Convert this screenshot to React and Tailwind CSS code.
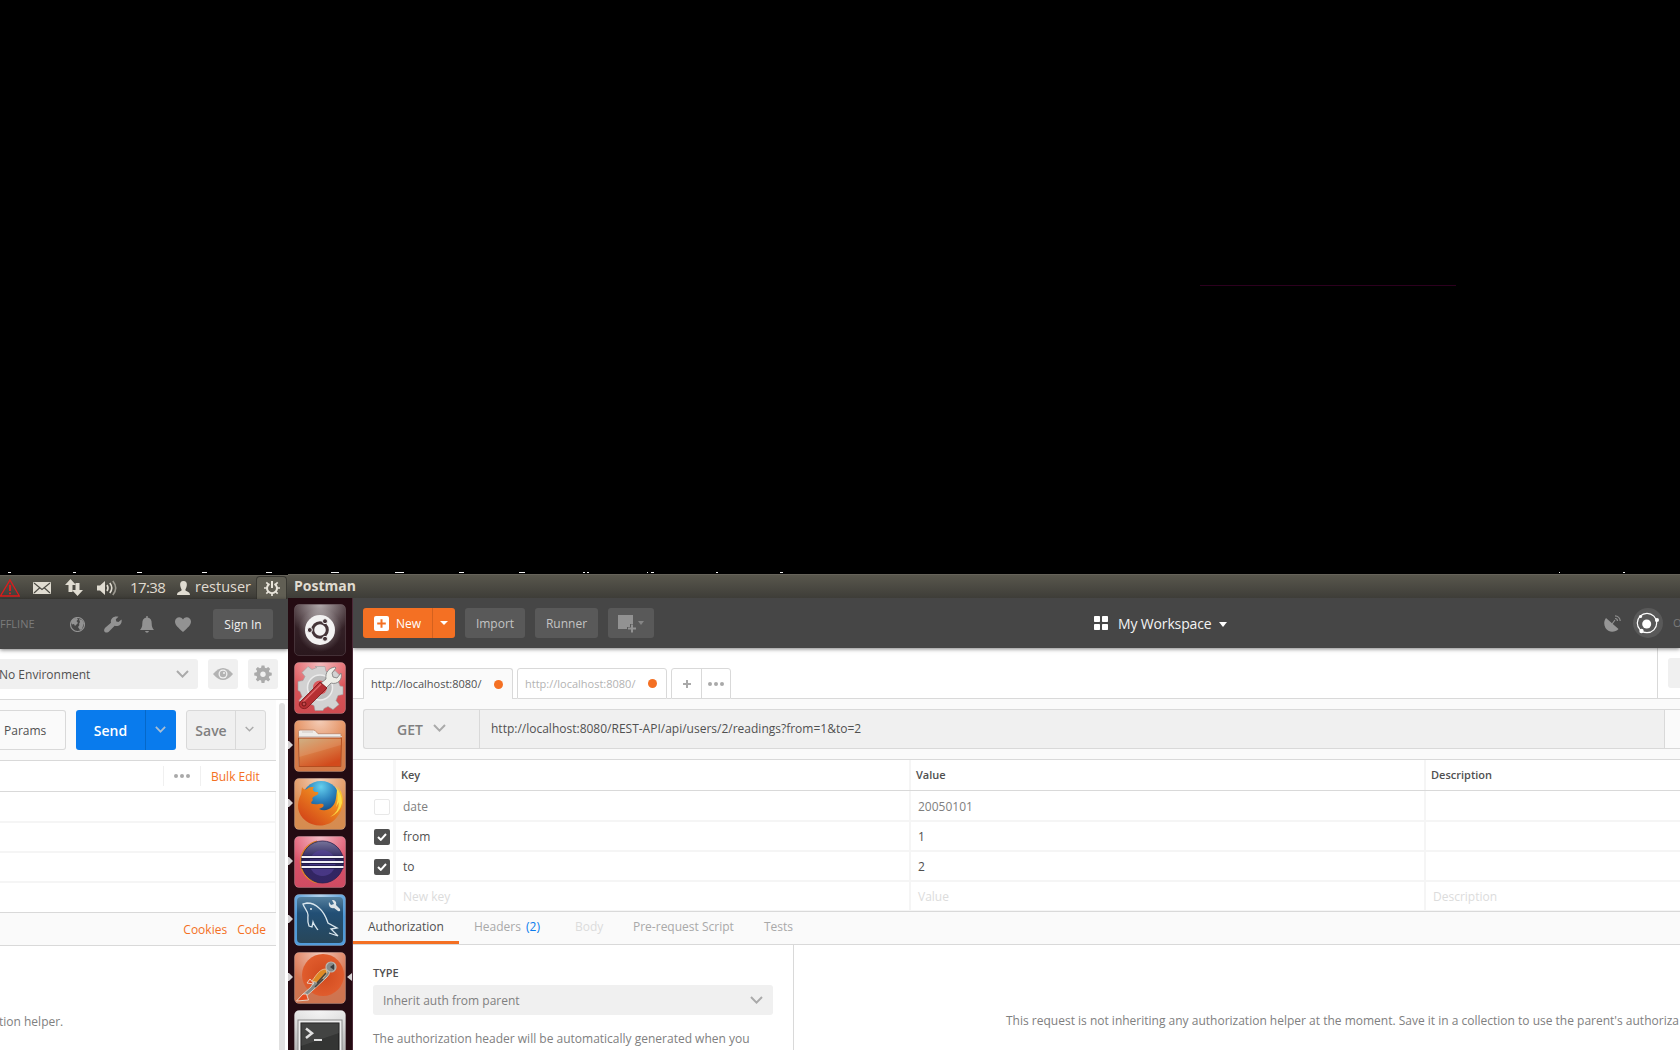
import React from "react";

const dashes = [
  [8, 3], [73, 3], [137, 5], [202, 5], [266, 6], [331, 8], [395, 9], [459, 5],
  [519, 6], [583, 2], [587, 2], [647, 1], [651, 3], [716, 2], [780, 3], [1559, 1], [1623, 2],
];

function Chevron({ w = 13, h = 8, c = "#aaaaaa", s = 2 }) {
  return (
    <svg width={w} height={h} viewBox="0 0 13 8" fill="none" stroke={c} strokeWidth={s}>
      <path d="M1 1l5.500 5.600L12 1" />
    </svg>
  );
}

function Dots() {
  return (
    <svg width="16" height="4" viewBox="0 0 16 4" fill="#a9a9a9">
      <circle cx="2" cy="2" r="2" /><circle cx="8" cy="2" r="2" /><circle cx="14" cy="2" r="2" />
    </svg>
  );
}

const gearPath = "M7.4 0h3.2l.5 2.6 1.5.6L14.8 1.700l2.200 2.200-1.500 2.200.6 1.500 2.600.5v3.200l-2.600.5-.6 1.500 1.500 2.200-2.200 2.200-2.200-1.500-1.500.6-.5 2.600H7.400l-.5-2.600-1.500-.6-2.200 1.500L1 15.500l1.500-2.200-.6-1.500L-.7 11.300V8.100l2.600-.5.6-1.500L1 3.900l2.200-2.200 2.200 1.500 1.500-.6z";

function SystemTray() {
  return (
    <div className="flex h-6 shrink-0 items-center border-t border-[#66635a] bg-linear-to-b from-[#59574d] to-[#3e3d38] text-[#e0dcd1]">
      <svg className="shrink-0" width="20" height="18" viewBox="0 0 20 18" fill="none" stroke="#e01b1b" strokeWidth="1.300">
        <path d="M10 1L19.300 17H.5z" />
        <path d="M10 6v6M10 13.500v1.800" strokeWidth="2" />
      </svg>
      <svg className="ml-[13px] shrink-0" width="18" height="12" viewBox="0 0 18 12">
        <rect width="18" height="12" rx="1" fill="#e0dcd1" />
        <path d="M1 1l8 6.500L17 1M1 11l5.500-5M17 11l-5.500-5" fill="none" stroke="#4b4a43" strokeWidth="1.100" />
      </svg>
      <svg className="ml-[14px] shrink-0" width="18" height="17" viewBox="0 0 18 17" fill="#e0dcd1">
        <path d="M5.500 0l5.500 6H7.500v7h-4V6H0zM12.500 17l5.500-6h-3.500V4h-4v7H7z" />
      </svg>
      <svg className="ml-[14px] shrink-0" width="21" height="16" viewBox="0 0 21 16">
        <path d="M0 5.500h3L8 1v14l-5-4.500H0z" fill="#e0dcd1" />
        <g fill="none" stroke="#e0dcd1" strokeWidth="1.600">
          <path d="M10 5q2 3 0 6M12.800 3q4 5 0 10" /><path d="M15.800 1q5.800 7 0 14" opacity=".55" />
        </g>
      </svg>
      <span className="ml-[12px] w-[37px] pb-[2px] text-[15px] leading-[22px] tracking-[-0.600px]">17:38</span>
      <svg className="ml-[10px] shrink-0" width="13" height="14" viewBox="0 0 13 14" fill="#e0dcd1">
        <path d="M6.500 0C9 0 10.300 2 9.800 4.500 9.500 6.500 8.500 8 8.300 9c.3 1.500 4.700 1.300 4.700 5H0c0-3.700 4.400-3.500 4.700-5C4.500 8 3.500 6.500 3.200 4.500 2.700 2 4 0 6.500 0z" />
      </svg>
      <span className="ml-[5px] w-[61px] pb-[2px] text-[14.500px] leading-[22px]">restuser</span>
      <div className="flex h-[23px] w-[31px] items-center justify-center rounded-t-[4px] border border-b-0 border-[#393832] bg-[#615f54]">
        <svg width="16" height="16" viewBox="0 0 16 16" fill="none" stroke="#e8e4da">
          <path d="M5.500 3.800a5 5 0 1 0 5 0" strokeWidth="2" />
          <path d="M8 1v7" strokeWidth="2" />
          <path d="M2.300 2.300L4.500 4.500M13.700 2.300l-2.200 2.200M0 8h3M13 8h3M2.300 13.700l2.200-2.200M13.700 13.700l-2.200-2.200M8 13v3" strokeWidth="1.700" />
        </svg>
      </div>
    </div>
  );
}

function LeftToolbar() {
  return (
    <div className="relative z-10 flex h-[50px] shrink-0 items-center bg-[#464646] shadow-[0_1px_4px_rgba(0,0,0,0.5)]">
      <span className="w-[70px] text-[11px] text-[#7b7b7b]">FFLINE</span>
      <svg className="shrink-0" width="15" height="15" viewBox="0 0 15 15">
        <circle cx="7.500" cy="7.500" r="7" fill="#464646" stroke="#929292" strokeWidth="1.200" />
        <path d="M1 5C2 2 4 1 7 1l1 1.500L6.500 4 8 6 6 8l-1 1-1-2-2 .5zM9 2l3 1 2 3-1 3-1 3-2 1-2-3 1.500-2L9 7l1-2z" fill="#929292" />
      </svg>
      <svg className="ml-[19px] shrink-0" width="18" height="17" viewBox="0 0 18 17" fill="#929292">
        <path d="M14.500.8L11.800 3.300l.5 2.200 2.200.6 3-2.600c.8 3-1 6-4 6.500-1 .2-2 0-2.800-.2L5 15.500c-1 1.200-3 1.600-4.200.4-1.200-1.200-.8-3 .4-4.200L7 6.800C6 2.600 10-.7 14.500.8z" />
      </svg>
      <svg className="ml-[18px] shrink-0" width="14" height="17" viewBox="0 0 14 17" fill="#929292">
        <path d="M6.300 0h1.400v1.500c3 .6 4 2.500 4 6 0 3.500.8 4.500 2.300 6.500H0c1.500-2 2.300-3 2.300-6.500 0-3.500 1-5.400 4-6zM5 15h4q-.5 1.800-2 1.800T5 15z" />
      </svg>
      <svg className="ml-[21px] shrink-0" width="16" height="15" viewBox="0 0 16 15" fill="#929292">
        <path d="M8 15C3 10.500 0 8 0 4.500 0 .5 5.500-1.500 8 2.500c2.500-4 8-2 8 2C16 8 13 10.500 8 15z" />
      </svg>
      <div className="ml-[22px] flex h-[30px] w-[60px] items-center justify-center rounded-[3px] bg-[#595959] pt-[2px] text-[12px] text-[#f0f0f0]">Sign In</div>
    </div>
  );
}

function LeftScreen() {
  return (
    <div className="mt-px flex w-72 shrink-0 flex-col overflow-hidden bg-white">
      <SystemTray />
      <LeftToolbar />
      <div className="flex h-[51px] shrink-0 items-center border-b border-[#d9d9d9]">
        <div className="flex h-[30px] w-[198px] items-center justify-between rounded-r-[3px] bg-[#f0f0f0] pr-[9px] text-[12px] text-[#505050]">
          <span className="-ml-px pt-[2px]">No Environment</span><Chevron />
        </div>
        <div className="ml-[10px] flex h-[30px] w-[30px] items-center justify-center rounded-[3px] bg-[#f0f0f0]">
          <svg width="20" height="12" viewBox="0 0 20 12">
            <path d="M0 6Q10-6 20 6 10 18 0 6z" fill="#b3b3b3" />
            <circle cx="10" cy="6" r="4.500" fill="#f0f0f0" /><circle cx="10" cy="6" r="3.200" fill="#b3b3b3" /><circle cx="11" cy="5" r="1" fill="#f0f0f0" />
          </svg>
        </div>
        <div className="ml-[10px] flex h-[30px] w-[30px] items-center justify-center rounded-[3px] bg-[#f0f0f0]">
          <svg width="18" height="18" viewBox="-1 -0.500 20 20"><path d={gearPath} fill="#ababab" /><circle cx="9" cy="9.700" r="3" fill="#f0f0f0" /></svg>
        </div>
      </div>
      <div className="flex min-h-0 flex-1">
        <div className="flex w-[276px] shrink-0 flex-col">
          <div className="flex h-[61px] shrink-0 items-center border-b border-[#d9d9d9] bg-[#fafafa]">
            <div className="flex h-10 w-[66px] items-center rounded-r-[3px] border border-l-0 border-[#d9d9d9] pt-[2px] pl-1 text-[12px] text-[#505050]">Params</div>
            <div className="ml-[10px] flex h-10 w-[100px] rounded-[3px] bg-[#097bed] text-[14px] font-semibold text-white">
              <span className="flex w-[69px] items-center justify-center">Send</span>
              <span className="flex flex-1 items-center justify-center border-l border-[#0568c9] pr-px pb-px"><Chevron w={11} h={7} c="#a9bed3" /></span>
            </div>
            <div className="ml-[10px] flex h-10 w-[80px] rounded-[3px] border border-[#d9d9d9] bg-[#f0f0f0] text-[14px] font-semibold text-[#808080]">
              <span className="flex w-[48px] items-center justify-center">Save</span>
              <span className="flex flex-1 items-center justify-center border-l border-[#d9d9d9] pr-[2px] pb-[2px]"><Chevron w={9} h={6} /></span>
            </div>
          </div>
          <div className="flex h-[31px] shrink-0 items-center justify-end border-b border-[#d9d9d9]">
            <div className="flex h-5 w-[37px] items-center justify-center border-l border-[#f0f0f0]"><Dots /></div>
            <div className="flex h-5 w-[76px] items-center border-l border-[#f0f0f0] pt-[2px] pl-[10px] text-[12px] text-[#f47023]">Bulk Edit</div>
          </div>
          <div className="h-[31px] shrink-0 border-r border-b-2 border-[#f5f5f5]" />
          <div className="h-[30px] shrink-0 border-r border-b-2 border-[#f5f5f5]" />
          <div className="h-[30px] shrink-0 border-r border-b-2 border-[#f5f5f5]" />
          <div className="h-[29px] shrink-0 border-r border-[#f5f5f5]" />
          <div className="flex h-[34px] shrink-0 items-center justify-end border-y border-[#d9d9d9] bg-[#fafafa] pt-[2px] pr-[10px] text-[12px] text-[#f47023]">
            <span>Cookies</span><span className="ml-[10px]">Code</span>
          </div>
          <div className="pt-[67px] text-[12px] leading-[18px] whitespace-nowrap text-[#808080]"><span className="-ml-px">tion helper.</span></div>
        </div>
        <div className="mt-[3px] ml-[3px] w-[6px] rounded-t-[3px] bg-[#e0e0e0]" />
      </div>
    </div>
  );
}

function Tile({ from, to, id, children, running, active, stroke = "#ffffff" }) {
  return (
    <div className="relative h-[52px] w-[52px] shrink-0">
      <svg width="52" height="52" viewBox="0 0 52 52">
        <defs>
          <linearGradient id={id} x2="0" y2="1"><stop stopColor={from} /><stop offset="1" stopColor={to} /></linearGradient>
          <radialGradient id={id + "g"} cx=".5" cy="0" r=".65"><stop stopColor="#fff" stopOpacity=".6" /><stop offset="1" stopColor="#fff" stopOpacity="0" /></radialGradient>
        </defs>
        <rect x=".5" y=".5" width="51" height="51" rx="4.500" fill={"url(#" + id + ")"} stroke={stroke} strokeOpacity=".2" />
        <rect x=".5" y=".5" width="51" height="51" rx="4.500" fill={"url(#" + id + "g)"} />
        {children}
      </svg>
      {running && <svg className="absolute top-[21px] -left-[6px]" width="5" height="8" viewBox="0 0 5 8" fill="#d5d2d3"><path d="M0 0h1l4 4-4 4H0z" /></svg>}
      {active && <svg className="absolute top-[21px] -right-[6px]" width="5" height="8" viewBox="0 0 5 8" fill="#d5d2d3"><path d="M5 0v8L0 4z" /></svg>}
    </div>
  );
}

function Dock() {
  return (
    <div className="flex w-[65px] shrink-0 flex-col gap-1.5 overflow-hidden border-r border-[#4b2a38] bg-[#240b12] pt-1.5 pl-1.5">
      <Tile id="dash" from="#3c292e" to="#2a171d" stroke="#bbaeb2">
        <defs><radialGradient id="halo"><stop stopColor="#fff" stopOpacity=".45" /><stop offset="1" stopColor="#fff" stopOpacity="0" /></radialGradient></defs>
        <circle cx="26" cy="26" r="22" fill="url(#halo)" />
        <circle cx="26" cy="26" r="15" fill="#f3f2f2" />
        <circle cx="26" cy="26" r="7.300" fill="none" stroke="#453438" strokeWidth="3" />
        <g fill="#453438" stroke="#f3f2f2" strokeWidth="1"><circle cx="15.800" cy="26" r="2.500" /><circle cx="31" cy="17.200" r="2.500" /><circle cx="31" cy="34.800" r="2.500" /></g>
      </Tile>
      <Tile id="set" from="#e25a60" to="#cf4b50">
        <g transform="translate(26 25.500)">
          <g fill="#d2d2d2" stroke="#a0a0a0" strokeWidth=".6">
            <path d="M-5-21H5l1 5 5 2 4-3 6 6-3 4.500 2 5 3 .5V7l-5 1-2 5 3 4-6 5-5-3-4 2-1 2H-5l-1-5-5-2-4 3-6-6 3-4-2-5-2-1V-6l5-1 2-4-3-4 6-6 4 3 5-2z" />
          </g>
          <circle r="12.500" fill="#bdbdbd" stroke="#ececec" strokeWidth="1.500" /><circle r="7" fill="#d9575b" />
        </g>
        <path d="M27 21l5-4c-1-7 3-11 9-12l1 1-4 5 1 4 4 1 4-5c2 7-4 12-10 10l-5 5z" fill="#eeeee8" stroke="#777" strokeWidth=".8" />
        <path d="M26 20l7 6-19 19c-4 4-11 0-8-5z" fill="#b62f33" stroke="#7a1619" strokeWidth=".8" />
        <path d="M27 22L9 40" stroke="#e26a6d" strokeWidth="1.200" /><circle cx="10" cy="42" r="2" fill="#c04a4c" stroke="#721417" />
      </Tile>
      <Tile id="files" from="#e3824b" to="#d37a48" running>
        <defs><linearGradient id="fold" x2=".6" y2="1"><stop stopColor="#c9a877" /><stop offset=".5" stopColor="#d97d45" /><stop offset="1" stopColor="#d24a1c" /></linearGradient></defs>
        <path d="M4.500 46V11.500q0-1.500 1.500-1.500h13.500q1.500 0 2.500 1.500l2 2.200h23v32z" fill="#efece9" stroke="#bb8263" strokeWidth=".8" />
        <path d="M8 12h11M5 16.500h43" stroke="#cfc8c4" strokeWidth="1.200" />
        <path d="M4.500 18h43l-.7 28.500H5.200z" fill="url(#fold)" stroke="#b34d20" strokeWidth="1" />
        <path d="M5 37q22-6 42-12v-6H5z" fill="#fff" opacity=".1" />
      </Tile>
      <Tile id="fx" from="#e08c52" to="#d58c50" running>
        <defs>
          <radialGradient id="globe" cx=".5" cy=".15" r=".8"><stop stopColor="#64d0ee" /><stop offset=".45" stopColor="#2b82bd" /><stop offset="1" stopColor="#0c2c63" /></radialGradient>
          <linearGradient id="fox" x1="1" x2=".1" y2="1"><stop stopColor="#ffe02d" /><stop offset=".35" stopColor="#ef8b20" /><stop offset="1" stopColor="#cf3c17" /></linearGradient>
        </defs>
        <circle cx="27" cy="22.500" r="19.500" fill="url(#globe)" />
        <path d="M8 9c1 2 3 3 5 2 2-2 4-2 7-2-2 2-1 4 1 5h3c1 2-1 3-3 4-3 1-3 3-2 4-3 3-2 4 1 4 4 1 6-1 9 0 2 2-1 4-4 5 8 4 16-2 17-11l1-8c2 2 3 5 3 8 1-5-1-9-3-12 9 9 7 24 0 31-7 10-22 11-31 4C3 36 2 26 7 16z" fill="url(#fox)" />
        <path d="M41 8q5 8 1 21l3-5q0 10-9 15 10-4 12-14 0-10-7-17z" fill="#ffe54a" opacity=".85" />
      </Tile>
      <Tile id="ecl" from="#e3566f" to="#ce4b62" running>
        <defs><linearGradient id="orb" x2="0" y2="1"><stop stopColor="#77749a" /><stop offset=".4" stopColor="#302760" /><stop offset="1" stopColor="#332564" /></linearGradient></defs>
        <path d="M23 5A21.500 21.500 0 0 0 23 47 26 26 0 0 1 23 5z" fill="#f59a22" stroke="#dc7c2b" />
        <circle cx="28.500" cy="26" r="21" fill="url(#orb)" stroke="#261f4c" strokeWidth=".8" />
        <circle cx="28.500" cy="27" r="13" fill="#56439b" opacity=".6" />
        <path d="M7.500 21.500h42M7.500 26.300h42M7.500 31h42" stroke="#201b45" strokeWidth="3.600" />
        <path d="M7.500 21h42M7.500 26h42M7.500 31h42" stroke="#f1f0f6" strokeWidth="2.200" />
      </Tile>
      <Tile id="sql" from="#4593d5" to="#529cdb" running>
        <defs><linearGradient id="sea" x2="0" y2="1"><stop stopColor="#55809f" /><stop offset=".35" stopColor="#224f75" /><stop offset="1" stopColor="#284659" /></linearGradient></defs>
        <rect x="3" y="3" width="46" height="46" rx="4" fill="url(#sea)" />
        <path d="M24 36c-2-3-4-5-5-8l-1 5-3-1c-2-5-1-8-1-11 0-4-4-7-5-11l4-1c5 0 9 2 12 5 5 4 7 9 9 15l9 5-6 1 7 7-9-3" fill="none" stroke="#d8e5ed" strokeWidth="1.300" />
        <circle cx="17" cy="15" r=".9" fill="#fff" />
        <path d="M38 6l2 4-3 1-2-3c-1 4 2 7 5 6l4 3q3 1 2-2l-4-4c1-3-1-5-4-5z" fill="#dfe5e8" />
      </Tile>
      <Tile id="post" from="#dd7450" to="#cc7450" running active>
        <defs><radialGradient id="pd"><stop stopColor="#d14a1d" /><stop offset="1" stopColor="#e05c2d" /></radialGradient></defs>
        <circle cx="29" cy="23" r="21" fill="url(#pd)" />
        <path d="M34 18c3 2 1 5-2 8L18 39l-7 6-3-2 9-8 7-12z" fill="#858987" stroke="#d9d3c8" strokeWidth=".9" />
        <path d="M32 17c-6 0-9 5-14 12l7 2 8-10z" fill="#df8a24" stroke="#eac9a2" strokeWidth=".8" />
        <path d="M32 21l-9 10M29 27l-8 8" stroke="#46423e" strokeWidth="1.500" />
        <path d="M16 27l-3 4 7 1zM9 42L2.500 49l12-1-2-6z" fill="#e64c20" stroke="#e8ded3" strokeWidth=".9" />
        <circle cx="37" cy="15" r="5" fill="#868b8a" stroke="#b8b9b5" strokeWidth="1.200" /><path d="M36 15l4-3v6z" fill="#393c3d" />
      </Tile>
      <Tile id="term" from="#e3e3e3" to="#a9a9a9">
        <rect x="4" y="10" width="44" height="44" fill="#ededed" stroke="#898989" />
        <rect x="7" y="13" width="38" height="44" fill="#343534" stroke="#171717" />
        <path d="M7 13h38v10L7 36z" fill="#fff" opacity=".08" />
        <path d="M12 18.500l6 4.700-6 4.700" fill="none" stroke="#e2e2e2" strokeWidth="2.500" /><path d="M20 30h8" stroke="#e2e2e2" strokeWidth="2" />
      </Tile>
    </div>
  );
}

function RightToolbar() {
  return (
    <div className="relative z-10 flex h-[50px] shrink-0 items-center bg-[#464646] pl-[10px] text-[12px] shadow-[0_1px_4px_rgba(0,0,0,0.5)]">
      <div className="flex h-[30px] w-[92px] shrink-0 rounded-[3px] bg-[#f47023] text-white">
        <span className="flex w-[69px] items-center pl-[11px]">
          <svg width="15" height="15" viewBox="0 0 15 15"><rect width="15" height="15" rx="2" fill="#fff" /><path d="M7.500 3.200v8.600M3.200 7.500h8.600" stroke="#f47023" strokeWidth="2" /></svg>
          <span className="ml-[7px] pt-[2px]">New</span>
        </span>
        <span className="flex flex-1 items-center justify-center border-l border-[#d4611e]"><svg width="8" height="4" viewBox="0 0 8 4" fill="#fff"><path d="M0 0h8L4 4z" /></svg></span>
      </div>
      <div className="ml-[10px] flex h-[30px] w-[60px] shrink-0 items-center justify-center rounded-[3px] bg-[#595959] pt-[2px] text-[#c4c4c4]">Import</div>
      <div className="ml-[10px] flex h-[30px] w-[63px] shrink-0 items-center justify-center rounded-[3px] bg-[#595959] pt-[2px] text-[#c4c4c4]">Runner</div>
      <div className="ml-[10px] flex h-[30px] w-[46px] shrink-0 items-center rounded-[3px] bg-[#595959] pl-[10px]">
        <svg width="27" height="19" viewBox="0 0 27 19">
          <path d="M0 1h15v9h-3v3H9v2H0z" fill="#929292" /><path d="M14 10.500v8M10 14.500h8" stroke="#929292" strokeWidth="2" /><path d="M20 7h6l-3 4z" fill="#858585" />
        </svg>
      </div>
      <div className="ml-[440px] flex shrink-0 items-center text-[14px] whitespace-nowrap text-[#f3f3f3]">
        <svg width="14" height="14" viewBox="0 0 14 14" fill="#fff"><rect width="6" height="6" rx=".7" /><rect x="8" width="6" height="6" rx=".7" /><rect y="8" width="6" height="6" rx=".7" /><rect x="8" y="8" width="6" height="6" rx=".7" /></svg>
        <span className="ml-[10px] w-[101px] tracking-[-0.150px]">My Workspace</span>
        <svg className="mt-[2px]" width="8" height="5" viewBox="0 0 8 5" fill="#fff"><path d="M0 0h8L4 5z" /></svg>
      </div>
      <svg className="ml-[377px] shrink-0" width="17" height="17" viewBox="0 0 17 17">
        <path d="M2 3l12.500 11C11 18 4 17.500 1.500 13-.5 9.500 0 5.500 2 3z" fill="#969696" />
        <path d="M8 9l3-4M11 3.500a2.500 2.500 0 0 1 2.500 2.500M11 .8a5.400 5.400 0 0 1 5.200 5.200" fill="none" stroke="#909090" strokeWidth="1.200" />
      </svg>
      <svg className="ml-3 shrink-0" width="30" height="30" viewBox="0 0 30 30">
        <circle cx="15" cy="15" r="15" fill="#595959" /><circle cx="14" cy="15" r="9.700" fill="none" stroke="#fff" strokeWidth="1.200" />
        <circle cx="13.700" cy="16" r="4.500" fill="#fff" /><circle cx="24" cy="12" r="2" fill="#fff" /><circle cx="8.500" cy="23" r="2.200" fill="#fff" /><circle cx="7.500" cy="8.500" r="1.600" fill="#fff" />
      </svg>
      <span className="ml-[10px] w-[7px] shrink-0 overflow-hidden text-[11px] text-[#7b7b7b]">O</span>
    </div>
  );
}

function Check({ state }) {
  if (state === "none") return null;
  if (state === "off") return <div className="h-4 w-4 rounded-[2px] border border-[#e8e8e8] bg-white" />;
  return (
    <div className="flex h-4 w-4 items-center justify-center rounded-[2px] bg-[#505050]">
      <svg width="10" height="8" viewBox="0 0 10 8" fill="none" stroke="#fff" strokeWidth="2"><path d="M1 4l2.800 2.800L9 1" /></svg>
    </div>
  );
}

const rows = [
  { s: "off", k: "date", v: "20050101", d: "", box: "h-[31px] border-b-2 leading-[31px] text-[#808080]" },
  { s: "on", k: "from", v: "1", d: "", box: "h-[30px] border-b-2 leading-[29px] text-[#505050]" },
  { s: "on", k: "to", v: "2", d: "", box: "h-[30px] border-b-2 leading-[29px] text-[#505050]" },
  { s: "none", k: "New key", v: "Value", d: "Description", box: "h-[29px] border-b leading-[29px] text-[#dcdcdc]" },
];

function RequestScreen() {
  return (
    <div className="flex min-w-0 flex-1 flex-col overflow-hidden bg-white">
      <RightToolbar />
      <div className="flex h-[51px] shrink-0">
        <div className="flex flex-1 items-end text-[11px]">
          <div className="h-full w-[10px] border-b border-[#d9d9d9]" />
          <div className="flex h-[31px] w-[150px] items-center justify-between rounded-t-[3px] border border-b-0 border-[#d9d9d9] bg-[#fafafa] pr-[9px] pl-[7px] text-[#505050]">
            <span>http://localhost:8080/</span><span className="h-[9px] w-[9px] rounded-full bg-[#f47023]" />
          </div>
          <div className="h-full w-1 border-b border-[#d9d9d9]" />
          <div className="flex h-[31px] w-[150px] items-center justify-between rounded-t-[3px] border border-[#d9d9d9] pr-[9px] pl-[7px] text-[#b3b3b3]">
            <span className="pt-px">http://localhost:8080/</span><span className="h-[9px] w-[9px] rounded-full bg-[#f47023]" />
          </div>
          <div className="h-full w-1 border-b border-[#d9d9d9]" />
          <div className="flex h-[31px] w-[60px] rounded-t-[3px] border border-[#d9d9d9]">
            <div className="flex w-[30px] items-center justify-center border-r border-[#d9d9d9]">
              <svg width="8" height="8" viewBox="0 0 8 8" stroke="#a9a9a9" strokeWidth="2"><path d="M4 0v8M0 4h8" /></svg>
            </div>
            <div className="flex flex-1 items-center justify-center"><Dots /></div>
          </div>
          <div className="h-full flex-1 border-b border-[#d9d9d9]" />
        </div>
        <div className="flex w-[23px] items-center border-b border-l border-[#d9d9d9] pl-[10px]"><div className="h-[30px] flex-1 rounded-l-[3px] bg-[#f0f0f0]" /></div>
      </div>
      <div className="flex h-[61px] shrink-0 items-center border-b border-[#d9d9d9] bg-[#fafafa] pl-[10px]">
        <div className="flex h-10 flex-1 rounded-l-[3px] border border-r-0 border-[#d9d9d9] bg-[#f0f0f0]">
          <div className="flex w-[116px] items-center border-r border-[#d9d9d9] pl-[33px] text-[14px] font-semibold text-[#808080]">
            GET<span className="ml-[10px] pb-[2px]"><Chevron /></span>
          </div>
          <span className="self-center pl-[11px] text-[12px] text-[#505050]">http://localhost:8080/REST-API/api/users/2/readings?from=1&amp;to=2</span>
        </div>
        <div className="h-10 w-4 border border-r-0 border-[#d9d9d9]" />
      </div>
      <div className="flex h-[31px] shrink-0 border-b border-[#d9d9d9] text-[11px] leading-[30px] font-semibold text-[#505050]">
        <div className="w-[43px] border-r-[3px] border-[#f7f7f7]" />
        <div className="w-[515px] border-r-2 border-[#f5f5f5] pl-[5px]">Key</div>
        <div className="w-[515px] border-r-2 border-[#f5f5f5] pl-[5px]">Value</div>
        <div className="pl-[5px]">Description</div>
      </div>
      {rows.map((r) => (
        <div key={r.k} className={"flex shrink-0 border-[#f5f5f5] text-[12px] " + r.box}>
          <div className="flex w-[43px] items-center justify-end border-r-[3px] border-[#f7f7f7] pt-[2px] pr-[3px]"><Check state={r.s} /></div>
          <div className="w-[515px] border-r-2 border-[#f5f5f5] pl-[7px]">{r.k}</div>
          <div className="w-[515px] border-r-2 border-[#f5f5f5] pl-[7px]">{r.v}</div>
          <div className="pl-[7px]">{r.d}</div>
        </div>
      ))}
      <div className="flex h-[34px] shrink-0 border-y border-[#d9d9d9] bg-[#fafafa] text-[12px] leading-[29px] text-[#a9a9a9]">
        <div className="w-[106px] border-b-[3px] border-[#f47023] pl-[15px] text-[#505050]">Authorization</div>
        <div className="w-[101px] pl-[15px]">Headers <span className="ml-[2px] text-[#097bed]">(2)</span></div>
        <div className="w-[58px] pl-[15px] text-[#dcdcdc]">Body</div>
        <div className="w-[131px] pl-[15px]">Pre-request Script</div>
        <div className="pl-[15px]">Tests</div>
      </div>
      <div className="flex min-h-0 flex-1 text-[12px] whitespace-nowrap text-[#808080]">
        <div className="w-[441px] shrink-0 border-r border-[#d9d9d9] pt-5 pl-5">
          <div className="h-5 text-[11px] leading-[15px] font-semibold text-[#505050]">TYPE</div>
          <div className="flex h-[30px] w-[400px] items-center justify-between rounded-[3px] bg-[#f0f0f0] pr-[10px] pl-[10px]"><span className="pt-[2px]">Inherit auth from parent</span><Chevron /></div>
          <div className="mt-[15px] leading-[18px]">The authorization header will be automatically generated when you</div>
        </div>
        <div className="pt-[67px] pl-[212px] leading-[18px]">This request is not inheriting any authorization helper at the moment. Save it in a collection to use the parent's authoriza</div>
      </div>
    </div>
  );
}

export default function App() {
  return (
    <div className="flex h-[1050px] w-[1680px] flex-col overflow-hidden bg-black font-['Open_Sans',sans-serif] antialiased">
      <div className="relative h-[574px] shrink-0">
        <div className="absolute top-[285px] left-[1200px] h-px w-64 bg-[#2c001e]" />
        {dashes.map(([x, w]) => (
          <div key={x} className="absolute top-[572px] h-px bg-[#eeeeee]" style={{ left: x, width: w }} />
        ))}
      </div>
      <div className="flex min-h-0 flex-1">
        <LeftScreen />
        <div className="flex min-w-0 flex-1 flex-col">
          <div className="h-6 shrink-0 border-t border-[#66635a] bg-linear-to-b from-[#59574d] to-[#3e3d38] pl-[6px] text-[14px] leading-[21px] font-bold text-[#e0dcd1]">Postman</div>
          <div className="flex min-h-0 flex-1"><Dock /><RequestScreen /></div>
        </div>
      </div>
    </div>
  );
}
